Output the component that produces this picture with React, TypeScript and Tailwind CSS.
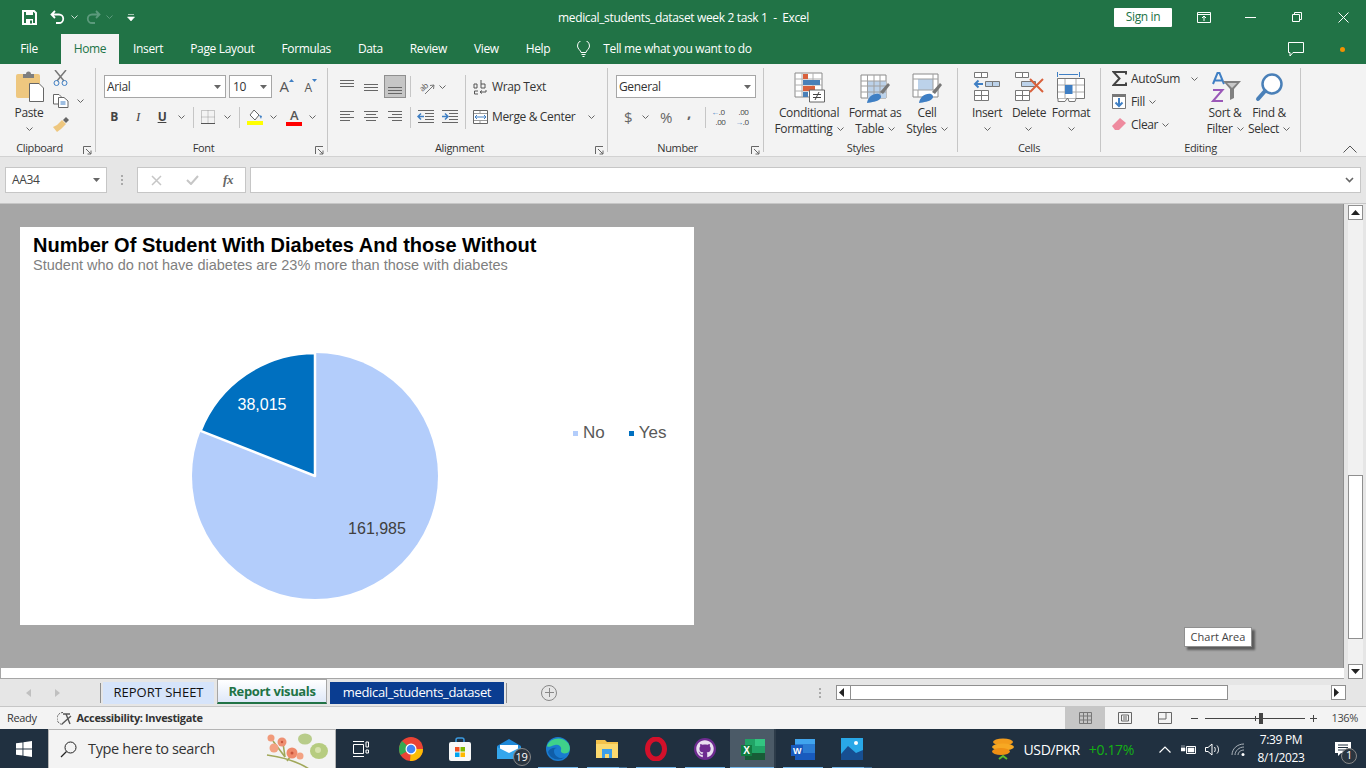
import React from 'react';
import { FaGithub } from 'react-icons/fa';

const ui = { fontFamily: '"Open Sans", "Noto Sans", sans-serif' };

const Chev = ({ color = '#666' }: { color?: string }) => (
  <svg width="7" height="4" viewBox="0 0 7 4" className="shrink-0">
    <path d="M.5.5l3 3 3-3" fill="none" stroke={color} />
  </svg>
);

const Caret = () => (
  <svg width="7" height="4" viewBox="0 0 7 4" className="shrink-0">
    <path d="M0 0h7L3.5 4z" fill="#666" />
  </svg>
);

const Launcher = () => (
  <svg width="9" height="9" viewBox="0 0 9 9" className="absolute right-[3px] bottom-[1px]">
    <path d="M.5 8V.5H8M3 3l5 5M8 4.500V8H4.500" fill="none" stroke="#666" />
  </svg>
);

const Group = ({ w, label, launcher, children }: { w: string; label: string; launcher?: boolean; children: React.ReactNode }) => (
  <div className={`relative flex flex-col shrink-0 ${w}`}>
    <div className="h-[76px] flex">{children}</div>
    <div className={`h-[16px] flex items-center justify-center text-[11px] text-[#333] ${launcher ? 'pr-[16px]' : ''}`}>{label}</div>
    {launcher && <Launcher />}
  </div>
);

const GroupSep = () => <div className="w-px h-[84px] mt-[4px] bg-[#c6c6c6] shrink-0" />;
const RowSep = () => <div className="w-px h-[21px] bg-[#c6c6c6] shrink-0" />;

const BigButton = ({ w, icon, lines, chevInline }: { w: string; icon: React.ReactNode; lines: string[]; chevInline?: boolean }) => (
  <div className={`flex flex-col items-center pt-[7px] shrink-0 ${w}`}>
    <div className="h-[32px] flex items-center justify-center">{icon}</div>
    <div className="mt-[2px] text-[12px] leading-[16px] text-[#333] text-center whitespace-nowrap">
      <div>{lines[0]}</div>
      {chevInline ? (
        <div className="flex items-center justify-center gap-[4px]">
          {lines[1]}
          <Chev />
        </div>
      ) : (
        <div className="h-[16px] flex items-center justify-center">
          <Chev />
        </div>
      )}
    </div>
  </div>
);

const Lines = ({ ys, x1s, x2s }: { ys: number[]; x1s: number[]; x2s: number[] }) => (
  <svg width="16" height="16" viewBox="0 0 16 16">
    {ys.map((y, i) => (
      <path key={i} d={`M${x1s[i]} ${y + 0.5}H${x2s[i]}`} stroke="#666" />
    ))}
  </svg>
);

const Big = {
  Conditional: () => (
    <svg width="31" height="31" viewBox="0 0 31 31">
      <path d="M1 1h27v24H1z" fill="#fff" stroke="#8a8a8a" />
      <path d="M8 1v24M19 1v24M1 7h27M1 13h27M1 19h27" stroke="#b0b0b0" />
      <path d="M9 2h5v5H9zM9 14h12v5H9z" fill="#d9613c" />
      <path d="M9 8h17v5H9zM9 20h5v5H9z" fill="#4a80b8" />
      <path d="M15.500 18h15v12h-15z" fill="#fff" stroke="#666" />
      <path d="M19 22.500h8M19 25.500h8M25 20l-4 8" stroke="#444" fill="none" />
    </svg>
  ),
  Table: () => (
    <svg width="31" height="31" viewBox="0 0 31 31">
      <path d="M1 3h25v23H1z" fill="#fff" stroke="#8a8a8a" />
      <path d="M8 9h18v17H8z" fill="#bcd2ea" />
      <path d="M7.500 3v23M14 3v23M20 3v23M1 9h25M1 14h25M1 20h25" stroke="#a0a0a0" />
      <path d="M20 20l8-9 2 2-7 9z" fill="#777" />
      <path d="M7 31c1-6 6-10 12-9 2 1 3 3 1 5-3 3-8 3-13 4z" fill="#3f7fc4" />
    </svg>
  ),
  Styles: () => (
    <svg width="31" height="31" viewBox="0 0 31 31">
      <path d="M1 2h25v23H1z" fill="#fff" stroke="#8a8a8a" />
      <path d="M6 7h15v11H6z" fill="#bcd2ea" />
      <path d="M1 7h25M1 18h25M6 18v7M21 2v16" stroke="#a0a0a0" fill="none" />
      <path d="M20 20l8-9 2 2-7 9z" fill="#777" />
      <path d="M7 31c1-6 6-10 12-9 2 1 3 3 1 5-3 3-8 3-13 4z" fill="#3f7fc4" />
    </svg>
  ),
  Insert: () => (
    <svg width="28" height="30" viewBox="0 0 28 30">
      <g fill="#fff" stroke="#777">
        <path d="M1.500.500h7v5h-7zM8.500.500h6v5h-6zM1.500 18.500h7v5h-7zM8.500 18.500h7v5h-7zM1.500 23.500h7v5h-7zM8.500 23.500h7v5h-7z" />
      </g>
      <path d="M12.500 9.500h7v5h-7zM19.500 9.500h7v5h-7z" fill="#bcd2ea" stroke="#777" />
      <path d="M10 12H2M5.500 8.500L2 12l3.500 3.500" fill="none" stroke="#3f7fc4" strokeWidth="2" />
    </svg>
  ),
  Delete: () => (
    <svg width="30" height="30" viewBox="0 0 30 30">
      <g fill="#fff" stroke="#777">
        <path d="M1.500.500h7v5h-7zM8.500.500h6v5h-6zM1.500 18.500h7v5h-7zM8.500 18.500h7v5h-7zM1.500 23.500h7v5h-7zM8.500 23.500h7v5h-7z" />
      </g>
      <path d="M7.500 9.500h14v5h-14z" fill="#bcd2ea" stroke="#777" />
      <path d="M16 7l13 13M29 7L16 20" stroke="#d9613c" strokeWidth="2" />
    </svg>
  ),
  Format: () => (
    <svg width="28" height="32" viewBox="0 0 28 32">
      <path d="M.5 1v5M22.500 1v5M2 3.500h19" stroke="#3f7fc4" fill="none" />
      <path d="M.5 7.500h27v20H.5z" fill="#fff" stroke="#777" />
      <path d="M8 8v19M19 8v19M1 14h26M1 21h26" stroke="#aaa" />
      <path d="M8 14h7.500v9H8z" fill="#3f7fc4" />
      <path d="M1 27.500v3h7l2-3M11 27.500l1 3h6l1-3" fill="#fff" stroke="#777" />
    </svg>
  ),
  Sort: () => (
    <svg width="31" height="31" viewBox="0 0 31 31">
      <path d="M3 12L7.500 1h2L14 12M5 8.500h7" fill="none" stroke="#3f7fc4" strokeWidth="2" />
      <path d="M3 18h9.500L3 29h10" fill="none" stroke="#9a58b8" strokeWidth="2" />
      <path d="M13 9h18l-7 8v9l-4 2V17z" fill="#808080" />
      <path d="M17 11h10l-5 5z" fill="#c8c8c8" />
    </svg>
  ),
  Find: () => (
    <svg width="29" height="29" viewBox="0 0 29 29">
      <circle cx="17" cy="11" r="9.500" fill="#fff" stroke="#4a80b8" strokeWidth="2.500" />
      <path d="M10 18l-7 8" stroke="#4a80b8" strokeWidth="4" strokeLinecap="round" />
    </svg>
  ),
};

const Ribbon = () => (
  <div className="h-[93px] bg-[#f3f3f3] border-b border-[#d2d2d2] flex shrink-0">
    <Group w="w-[95px]" label="Clipboard" launcher>
      <div className="flex flex-col items-center w-[46px] ml-[6px] pt-[7px]">
        <svg width="29" height="31" viewBox="0 0 29 31">
          <path d="M1 5a2 2 0 012-2h20a2 2 0 012 2v22H3a2 2 0 01-2-2z" fill="#eec77f" />
          <path d="M8 3h3a2.500 2.500 0 015 0h3v4H8z" fill="#7f7f7f" />
          <path d="M14.500 12.500H24l4.500 4.500v13.500h-14z" fill="#fff" stroke="#666" />
        </svg>
        <div className="mt-[3px] text-[12px] leading-[16px] text-[#333]">Paste</div>
        <div className="h-[16px] flex items-center">
          <Chev />
        </div>
      </div>
      <div className="flex flex-col pt-[2px]">
        <div className="h-[23px] flex items-center pl-[1px]">
          <svg width="15" height="16" viewBox="0 0 15 16">
            <path d="M2 0l9 11M13 0L4 11" stroke="#777" strokeWidth="1.500" />
            <circle cx="3.500" cy="13" r="2.500" fill="none" stroke="#3f7fc4" />
            <circle cx="11.500" cy="13" r="2.500" fill="none" stroke="#3f7fc4" />
          </svg>
        </div>
        <div className="h-[24px] flex items-center gap-[8px] pl-[1px]">
          <svg width="16" height="14" viewBox="0 0 16 14">
            <path d="M.5.500H6L8 2.500V10H.5z" fill="#fff" stroke="#666" />
            <path d="M5.500 3.500H11L15 7v6.500H5.500z" fill="#fff" stroke="#666" />
            <path d="M7.500 8h5M7.500 10h5" stroke="#3f7fc4" />
          </svg>
          <Chev />
        </div>
        <div className="h-[23px] flex items-center pl-[1px]">
          <svg width="16" height="15" viewBox="0 0 16 15">
            <path d="M10 3l3-3 3 3-3 3z" fill="#666" />
            <path d="M9 3l4 4-5 5-4 3-4-5 4-2z" fill="#eec77f" />
          </svg>
        </div>
      </div>
    </Group>
    <GroupSep />
    <Group w="w-[231px]" label="Font" launcher>
      <div className="flex flex-col pl-[8px] pt-[11px]">
        <div className="h-[23px] flex">
          <div className="w-[122px] h-[23px] bg-white border border-[#a6a6a6] flex items-center justify-between pl-[2px] pr-[4px] text-[12px] text-[#333]">
            Arial
            <Caret />
          </div>
          <div className="w-[43px] h-[23px] ml-[3px] bg-white border border-[#a6a6a6] flex items-center justify-between pl-[3px] pr-[4px] text-[12px] text-[#333]">
            10
            <Caret />
          </div>
          <div className="w-[25px] ml-[1px] flex items-center justify-center pl-[2px]">
            <span className="text-[15px] text-[#555]">A</span>
            <svg width="5" height="3" viewBox="0 0 5 3" className="-mt-[12px]">
              <path d="M0 3l2.500-3L5 3z" fill="#3f7fc4" />
            </svg>
          </div>
          <div className="w-[25px] flex items-center justify-center">
            <span className="text-[12px] text-[#555] mt-[2px]">A</span>
            <svg width="5" height="3" viewBox="0 0 5 3" className="-mt-[12px]">
              <path d="M0 0l2.500 3L5 0z" fill="#3f7fc4" />
            </svg>
          </div>
        </div>
        <div className="h-[24px] mt-[7px] -ml-[2px] flex items-center">
          <span className="w-[24px] text-center text-[12px] font-bold text-[#444]">B</span>
          <span className="w-[24px] text-center text-[13px] italic text-[#444]" style={{ fontFamily: '"Liberation Serif", serif' }}>I</span>
          <span className="w-[24px] text-center text-[12px] font-bold underline text-[#444]">U</span>
          <span className="w-[14px] flex justify-center"><Chev /></span>
          <div className="ml-[5px]"><RowSep /></div>
          <span className="w-[22px] ml-[3px] flex justify-center">
            <svg width="14" height="14" viewBox="0 0 14 14">
              <path d="M.5.500h13v13H.5zM7 .5v13M.5 7h13" fill="none" stroke="#999" strokeDasharray="1 1" />
              <path d="M0 13.500h14" stroke="#555" />
            </svg>
          </span>
          <span className="w-[14px] ml-[1px] flex justify-center"><Chev /></span>
          <div className="ml-[5px]"><RowSep /></div>
          <span className="w-[22px] ml-[4px] flex justify-center">
            <svg width="16" height="16" viewBox="0 0 16 16">
              <path d="M7 1l5 5-4 5-5-5z" fill="#fff" stroke="#666" />
              <path d="M12 6l3 1-1 3z" fill="#3f7fc4" />
              <path d="M0 12h16v4H0z" fill="#ffff00" />
            </svg>
          </span>
          <span className="w-[14px] flex justify-center"><Chev /></span>
          <span className="w-[22px] ml-[3px] flex flex-col items-center">
            <span className="text-[13px] leading-[13px] font-semibold text-[#555]">A</span>
            <span className="w-[16px] h-[4px] bg-[#ff0000]" />
          </span>
          <span className="w-[14px] flex justify-center"><Chev /></span>
        </div>
      </div>
    </Group>
    <GroupSep />
    <Group w="w-[279px]" label="Alignment" launcher>
      <div className="flex flex-col pl-[7px] pt-[11px] w-[137px] shrink-0">
        <div className="h-[23px] flex items-center">
          <span className="w-[24px] flex justify-center"><Lines ys={[1, 4, 7]} x1s={[1, 1, 1]} x2s={[15, 15, 15]} /></span>
          <span className="w-[24px] flex justify-center"><Lines ys={[5, 8, 11]} x1s={[1, 1, 1]} x2s={[15, 15, 15]} /></span>
          <span className="w-[22px] h-[23px] ml-[1px] bg-[#c6c6c6] border border-[#8f8f8f] flex items-center justify-center"><Lines ys={[8, 11, 14]} x1s={[1, 1, 1]} x2s={[15, 15, 15]} /></span>
          <div className="ml-[4px]"><RowSep /></div>
          <span className="w-[20px] ml-[6px] flex justify-center">
            <svg width="17" height="16" viewBox="0 0 17 16" className="overflow-visible">
              <text x="1" y="11" fontSize="8" fill="#555" transform="rotate(-40 5 9)" fontFamily="Open Sans">ab</text>
              <path d="M6 15l9-9M15 6l-4 .5M15 6l-.5 4" fill="none" stroke="#777" />
            </svg>
          </span>
          <span className="ml-[2px]"><Chev /></span>
        </div>
        <div className="h-[24px] mt-[7px] flex items-center">
          <span className="w-[24px] flex justify-center"><Lines ys={[2, 5, 8, 11]} x1s={[1, 1, 1, 1]} x2s={[15, 11, 15, 11]} /></span>
          <span className="w-[24px] flex justify-center"><Lines ys={[2, 5, 8, 11]} x1s={[1, 3, 1, 3]} x2s={[15, 13, 15, 13]} /></span>
          <span className="w-[24px] flex justify-center"><Lines ys={[2, 5, 8, 11]} x1s={[1, 5, 1, 5]} x2s={[15, 15, 15, 15]} /></span>
          <div className="ml-[3px]"><RowSep /></div>
          <span className="w-[24px] ml-[2px] flex justify-center">
            <svg width="17" height="14" viewBox="0 0 17 14">
              <path d="M1 .5h16M8 3.500h9M8 6.500h9M8 9.500h9M1 12.500h16" stroke="#666" />
              <path d="M1 6.500h6M4 3.500l-3 3 3 3" stroke="#3f7fc4" strokeWidth="1.500" fill="none" />
            </svg>
          </span>
          <span className="w-[24px] flex justify-center">
            <svg width="17" height="14" viewBox="0 0 17 14">
              <path d="M1 .5h16M8 3.500h9M8 6.500h9M8 9.500h9M1 12.500h16" stroke="#666" />
              <path d="M1 6.500h6M4 3.500l3 3-3 3" stroke="#3f7fc4" strokeWidth="1.500" fill="none" />
            </svg>
          </span>
        </div>
      </div>
      <div className="mt-[11px]"><div className="w-px h-[54px] bg-[#c6c6c6]" /></div>
      <div className="flex flex-col pl-[7px] pt-[11px] text-[12px] text-[#333]">
        <div className="h-[23px] flex items-center">
          <svg width="15" height="16" viewBox="0 0 15 16" className="mr-[4px]">
            <path d="M1 5h3v4H1M1 5v4M8 1v8M8 5h4v4H8M5 15H1.500v-3H5M7 13h6v-2M7 13l2-1.500M7 13l2 1.500" fill="none" stroke="#555" />
          </svg>
          Wrap Text
        </div>
        <div className="h-[24px] mt-[7px] flex items-center">
          <svg width="15" height="14" viewBox="0 0 15 14" className="mr-[4px]">
            <path d="M.5.500h14v13H.5z" fill="#fff" stroke="#666" />
            <path d="M1 3.500h13M1 10.500h13M7 1v2M7 11v2" stroke="#999" />
            <path d="M2.500 7h10M4 5L2 7l2 2M11 5l2 2-2 2" stroke="#3f7fc4" fill="none" />
          </svg>
          Merge &amp; Center
          <span className="ml-[13px]"><Chev /></span>
        </div>
      </div>
    </Group>
    <GroupSep />
    <Group w="w-[155px]" label="Number" launcher>
      <div className="flex flex-col pl-[8px] pt-[11px]">
        <div className="w-[140px] h-[23px] bg-white border border-[#a6a6a6] flex items-center justify-between pl-[2px] pr-[4px] text-[12px] text-[#333]">
          General
          <Caret />
        </div>
        <div className="h-[24px] mt-[7px] flex items-center text-[#666]">
          <span className="w-[24px] text-center text-[15px]">$</span>
          <span className="w-[10px] flex justify-center"><Chev /></span>
          <span className="w-[24px] ml-[4px] text-center text-[15px]">%</span>
          <span className="w-[22px] text-center text-[15px] font-bold leading-[10px] -mt-[10px]">,</span>
          <div className="ml-[5px]"><RowSep /></div>
          <span className="w-[24px] flex flex-col items-center text-[8px] leading-[10px] text-[#444] whitespace-nowrap">
            <span><span className="text-[#3f7fc4]">←</span>.0</span>
            <span className="ml-[5px]">.00</span>
          </span>
          <span className="w-[24px] flex flex-col items-center text-[8px] leading-[10px] text-[#444] whitespace-nowrap">
            <span className="ml-[3px]">.00</span>
            <span><span className="text-[#3f7fc4]">→</span>.0</span>
          </span>
        </div>
      </div>
    </Group>
    <GroupSep />
    <Group w="w-[193px]" label="Styles">
      <div className="flex pl-[5px]">
        <BigButton w="w-[80px]" icon={<Big.Conditional />} lines={['Conditional', 'Formatting']} chevInline />
        <BigButton w="w-[52px]" icon={<Big.Table />} lines={['Format as', 'Table']} chevInline />
        <BigButton w="w-[52px]" icon={<Big.Styles />} lines={['Cell', 'Styles']} chevInline />
      </div>
    </Group>
    <GroupSep />
    <Group w="w-[142px]" label="Cells">
      <div className="flex pl-[8px]">
        <BigButton w="w-[42px]" icon={<Big.Insert />} lines={['Insert']} />
        <BigButton w="w-[42px]" icon={<Big.Delete />} lines={['Delete']} />
        <BigButton w="w-[42px]" icon={<Big.Format />} lines={['Format']} />
      </div>
    </Group>
    <GroupSep />
    <Group w="w-[199px]" label="Editing">
      <div className="flex flex-col w-[102px] pl-[11px] pt-[3px] text-[12px] text-[#333] shrink-0">
        <div className="h-[23px] flex items-center">
          <svg width="15" height="15" viewBox="0 0 15 15">
            <path d="M14 3.500V1H1.500l6 6.500-6 6.500H14v-2.500" fill="none" stroke="#444" strokeWidth="2" />
          </svg>
          <span className="ml-[4px]">AutoSum</span>
          <span className="ml-[11px]"><Chev /></span>
        </div>
        <div className="h-[23px] flex items-center">
          <svg width="14" height="15" viewBox="0 0 14 15">
            <path d="M.5.500h13v14H.5z" fill="#fff" stroke="#777" />
            <path d="M0 0h14v3H0z" fill="#777" />
            <path d="M7 4v8M3.500 8.500L7 12l3.500-3.500" fill="none" stroke="#3f7fc4" strokeWidth="2" />
          </svg>
          <span className="ml-[5px]">Fill</span>
          <span className="ml-[4px]"><Chev /></span>
        </div>
        <div className="h-[23px] flex items-center">
          <svg width="14" height="13" viewBox="0 0 14 13">
            <path d="M0 8l8-8 6 5-7 7H3z" fill="#ee8a9e" />
          </svg>
          <span className="ml-[5px]">Clear</span>
          <span className="ml-[4px]"><Chev /></span>
        </div>
      </div>
      <BigButton w="w-[44px]" icon={<Big.Sort />} lines={['Sort &', 'Filter']} chevInline />
      <BigButton w="w-[44px]" icon={<Big.Find />} lines={['Find &', 'Select']} chevInline />
    </Group>
    <GroupSep />
    <div className="flex-1 flex justify-end items-end pb-[3px] pr-[9px]">
      <svg width="14" height="8" viewBox="0 0 14 8">
        <path d="M.5 7.500L7 1l6.500 6.500" fill="none" stroke="#555" />
      </svg>
    </div>
  </div>
);

const TitleBar = () => (
  <div className="h-[34px] flex items-center relative shrink-0 text-white">
    <div className="w-[58px] flex justify-end pr-[21px] pl-[21px] shrink-0">
      <svg width="15" height="15" viewBox="0 0 15 15">
        <path d="M1 1h11l2 2v11H1z" fill="none" stroke="#fff" strokeWidth="2" />
        <path d="M4 1h7v4H4zM4 9h7v5H4z" fill="#fff" />
        <path d="M8 10.500h2v3H8z" fill="#217346" />
      </svg>
    </div>
    <svg width="16" height="14" viewBox="0 0 16 14" className="-ml-[8px]">
      <path d="M5 1L1.500 4.500 5 8M2 4.500h7a4.200 4.200 0 010 8.500H6" fill="none" stroke="#fff" strokeWidth="1.800" />
    </svg>
    <span className="ml-[5px]"><Chev color="#cfe0d6" /></span>
    <svg width="16" height="14" viewBox="0 0 16 14" className="ml-[7px]">
      <path d="M11 1l3.500 3.500L11 8M14 4.500H7a4.200 4.200 0 000 8.500h3" fill="none" stroke="#5c9a7c" strokeWidth="1.800" />
    </svg>
    <span className="ml-[5px]"><Chev color="#5c9a7c" /></span>
    <svg width="8" height="7" viewBox="0 0 8 7" className="ml-[14px]">
      <path d="M1 .5h6M.5 3h7L4 7z" fill="#fff" stroke="#fff" strokeWidth=".6" />
    </svg>
    <div className="absolute left-[558px] top-0 pt-[1px] h-[34px] flex items-center text-[12px] whitespace-pre">medical_students_dataset week 2 task 1  -  Excel</div>
    <div className="ml-auto flex items-center">
      <div className="w-[58px] h-[19px] bg-white rounded-[1px] text-[#217346] text-[12px] flex items-center justify-center">Sign in</div>
      <div className="w-[46px] ml-[9px] flex justify-center">
        <svg width="14" height="11" viewBox="0 0 14 11">
          <path d="M.5.500h13v10H.5zM1 2.500h12M7 9V4M5 6l2-2 2 2" fill="none" stroke="#fff" />
        </svg>
      </div>
      <div className="w-[47px] flex justify-center">
        <svg width="11" height="1" viewBox="0 0 11 1"><path d="M0 .5h11" stroke="#fff" /></svg>
      </div>
      <div className="w-[46px] flex justify-center">
        <svg width="10" height="10" viewBox="0 0 10 10">
          <path d="M.5 2.500h7v7h-7zM2.500 2V.5h7v7H8" fill="none" stroke="#fff" />
        </svg>
      </div>
      <div className="w-[46px] flex justify-center">
        <svg width="11" height="11" viewBox="0 0 11 11"><path d="M.5.500l10 10M10.500.500l-10 10" stroke="#fff" /></svg>
      </div>
    </div>
  </div>
);

const TabBar = () => (
  <div className="h-[30px] flex items-stretch text-white text-[12px] shrink-0 relative">
    <div className="w-[61px] flex items-center justify-center pr-[3px]">File</div>
    <div className="w-[58px] bg-[#f3f3f3] text-[#217346] flex items-center justify-center">Home</div>
    <div className="flex items-center gap-[27px] ml-[14px] whitespace-nowrap">
      <span>Insert</span>
      <span>Page Layout</span>
      <span>Formulas</span>
      <span>Data</span>
      <span>Review</span>
      <span>View</span>
      <span>Help</span>
      <span className="flex items-center gap-[13px]">
        <svg width="13" height="16" viewBox="0 0 13 16">
          <path d="M4 11.500c0-2-3.500-3.500-3.500-6.500a6 6 0 0112 0c0 3-3.500 4.500-3.500 6.500zM4.500 13.500h4M5.500 15.500h2" fill="none" stroke="#fff" />
        </svg>
        Tell me what you want to do
      </span>
    </div>
    <div className="ml-auto flex items-center">
      <svg width="16" height="15" viewBox="0 0 16 15">
        <path d="M.5.500h15v10H5l-3 3.500v-3.500H.5z" fill="none" stroke="#fff" />
      </svg>
      <span className="w-[5px] h-[5px] rounded-full bg-[#f29100] ml-[36px] mr-[21px]" />
    </div>
  </div>
);

const FormulaBar = () => (
  <div className="h-[47px] bg-[#e6e6e6] flex items-center pl-[5px] pr-[5px] shrink-0 border-b border-[#c6c6c6]">
    <div className="w-[102px] h-[26px] bg-white border border-[#c6c6c6] flex items-center justify-between pl-[6px] pr-[6px] text-[12px] text-[#444]">
      AA34
      <Caret />
    </div>
    <div className="w-[30px] flex flex-col items-center gap-[2px]">
      <span className="w-[2px] h-[2px] bg-[#aaa]" />
      <span className="w-[2px] h-[2px] bg-[#aaa]" />
      <span className="w-[2px] h-[2px] bg-[#aaa]" />
    </div>
    <div className="w-[109px] h-[26px] bg-white border border-[#c6c6c6] flex items-center">
      <span className="w-[36px] ml-[1px] flex justify-center">
        <svg width="11" height="11" viewBox="0 0 11 11"><path d="M1 1l9 9M10 1l-9 9" stroke="#c6c6c6" strokeWidth="1.500" /></svg>
      </span>
      <span className="w-[37px] flex justify-center">
        <svg width="13" height="10" viewBox="0 0 13 10"><path d="M1 5l4 4 7-8" fill="none" stroke="#c6c6c6" strokeWidth="2" /></svg>
      </span>
      <span className="w-[34px] text-center text-[13px] italic font-bold text-[#666]" style={{ fontFamily: '"Liberation Serif", serif' }}>fx</span>
    </div>
    <div className="flex-1 h-[26px] ml-[4px] bg-white border border-[#c6c6c6] flex items-center justify-end pr-[6px]">
      <svg width="9" height="6" viewBox="0 0 9 6"><path d="M1 1l3.500 3.500L8 1" fill="none" stroke="#666" strokeWidth="1.600" /></svg>
    </div>
  </div>
);

const Chart = () => (
  <div className="w-[674px] h-[398px] bg-white ml-[19px] mt-[23px] pl-[13px] pt-[6px] tracking-normal" style={{ fontFamily: '"Liberation Sans", Arial, sans-serif' }}>
    <div className="text-[20px] leading-[24px] font-bold text-black whitespace-nowrap">Number Of Student With Diabetes And those Without</div>
    <div className="text-[14.500px] leading-[16px] text-[#7f7f7f] whitespace-nowrap">Student who do not have diabetes are 23% more than those with diabetes</div>
    <div className="flex items-start mt-[80px]">
      <svg width="248" height="248" viewBox="0 0 248 248" className="ml-[158px] shrink-0 -mt-[1px]">
        <circle cx="124" cy="124" r="123" fill="#b3cdfb" />
        <path d="M124 124V1A123 123 0 0 0 9.600 78.800z" fill="#0070c0" stroke="#fff" strokeWidth="2.500" strokeLinejoin="round" />
        <text x="71" y="58" textAnchor="middle" fontSize="16" fill="#fff">38,015</text>
        <text x="186" y="182" textAnchor="middle" fontSize="16" fill="#404040">161,985</text>
      </svg>
      <div className="ml-[134px] mt-[70px] flex items-center text-[17px] leading-[20px] text-[#595959]">
        <span className="w-[5px] h-[5px] bg-[#b3cdfb]" />
        <span className="ml-[5px]">No</span>
        <span className="w-[5px] h-[5px] bg-[#0070c0] ml-[24px]" />
        <span className="ml-[5px]">Yes</span>
      </div>
    </div>
  </div>
);

const ScrollBtn = ({ dir }: { dir: 'up' | 'down' | 'left' | 'right' }) => {
  const d = { up: 'M0 5L4.500 0 9 5z', down: 'M0 0l4.500 5L9 0z', left: 'M5 0L0 4.500 5 9z', right: 'M0 0l5 4.500L0 9z' }[dir];
  return (
    <div className="w-[15px] h-[15px] bg-white border border-[#8f8f8f] flex items-center justify-center shrink-0">
      <svg width="9" height="9" viewBox="0 0 9 9" className={dir === 'left' || dir === 'right' ? '' : 'mt-[3px]'}>
        <path d={d} fill="#222" />
      </svg>
    </div>
  );
};

const SheetArea = () => (
  <div className="h-[475px] flex shrink-0 relative">
    <div className="w-[1344px] shrink-0 flex flex-col bg-white border-l border-b border-[#a6a6a6]">
      <div className="h-[464px] bg-[#a6a6a6] flex items-start border-r border-[#8f8f8f]">
        <Chart />
      </div>
    </div>
    <div className="flex-1 bg-[#e6e6e6] pl-[4px] pr-[3px] flex">
      <div className="w-[15px] bg-[#f1f1f1] flex flex-col">
        <div className="h-[1px]" />
        <ScrollBtn dir="up" />
        <div className="h-[255px]" />
        <div className="h-[164px] bg-white border border-[#8f8f8f]" />
        <div className="flex-1" />
        <ScrollBtn dir="down" />
      </div>
    </div>
    <div className="absolute left-[1184px] top-[423px] w-[68px] h-[20px] bg-white border border-[#8f8f8f] shadow-[3px_3px_2px_rgba(0,0,0,0.45)] flex items-center justify-center text-[11px] tracking-normal text-[#444] whitespace-nowrap">Chart Area</div>
  </div>
);

const SheetTabs = () => (
  <div className="h-[28px] bg-[#e6e6e6] border-b border-[#c6c6c6] flex items-center text-[13px] shrink-0">
    <div className="w-[100px] flex pl-[26px] gap-[24px] shrink-0">
      <svg width="5" height="8" viewBox="0 0 5 8"><path d="M5 0L0 4l5 4z" fill="#c0c0c0" /></svg>
      <svg width="5" height="8" viewBox="0 0 5 8"><path d="M0 0l5 4-5 4z" fill="#c0c0c0" /></svg>
    </div>
    <div className="w-px h-[20px] bg-[#8f8f8f] shrink-0" />
    <div className="w-[111px] h-[22px] ml-[2px] bg-[#d6e4fa] text-[#111] tracking-normal flex items-center justify-center">REPORT SHEET</div>
    <div className="w-[110px] h-[25px] ml-[3px] -mt-[3px] pt-[2px] border-x border-t border-[#a6a6a6] border-b-2 border-b-[#217346] bg-gradient-to-b from-white to-[#dfe8f8] text-[#217346] font-bold flex items-center justify-center">Report visuals</div>
    <div className="w-[174px] h-[22px] ml-[3px] bg-[#0a3d91] text-white flex items-center justify-center">medical_students_dataset</div>
    <div className="w-px h-[20px] ml-[2px] bg-[#8f8f8f] shrink-0" />
    <div className="ml-[34px] w-[16px] h-[16px] rounded-full border border-[#888] flex items-center justify-center">
      <svg width="9" height="9" viewBox="0 0 9 9"><path d="M4.500 0v9M0 4.500h9" stroke="#888" /></svg>
    </div>
    <div className="ml-[262px] flex flex-col gap-[2px]">
      <span className="w-[2px] h-[2px] bg-[#aaa]" />
      <span className="w-[2px] h-[2px] bg-[#aaa]" />
      <span className="w-[2px] h-[2px] bg-[#aaa]" />
    </div>
    <div className="ml-[15px] flex items-center">
      <ScrollBtn dir="left" />
      <div className="w-[377px] h-[15px] bg-white border border-[#8f8f8f] border-l-0" />
      <div className="w-[103px] h-[15px] bg-[#efefef]" />
      <ScrollBtn dir="right" />
    </div>
  </div>
);

const StatusBar = () => (
  <div className="h-[22px] bg-[#f3f3f3] flex items-center text-[11px] text-[#333] shrink-0">
    <span className="ml-[7px]">Ready</span>
    <svg width="17" height="15" viewBox="0 0 17 15" className="ml-[20px]">
      <path d="M6 1.500a6 6 0 100 12" fill="none" stroke="#555" strokeDasharray="2 1" />
      <path d="M6 3h7M9 3l4 10M14 5l-9 8" stroke="#555" strokeWidth="1.400" fill="none" />
    </svg>
    <span className="ml-[3px] font-bold text-[#333]">Accessibility: Investigate</span>
    <div className="ml-auto h-[22px] flex items-center">
      <div className="w-[40px] h-[22px] bg-[#c6c6c6] flex items-center justify-center">
        <svg width="13" height="12" viewBox="0 0 13 12"><path d="M.5.500h12v11H.5zM4.500 1v10M8.500 1v10M1 4h11M1 8h11" fill="none" stroke="#777" /></svg>
      </div>
      <div className="w-[40px] flex justify-center">
        <svg width="14" height="12" viewBox="0 0 14 12"><path d="M.5.500h13v11H.5zM3.500 3h7v6h-7zM5 5h4M5 7h4" fill="none" stroke="#666" /></svg>
      </div>
      <div className="w-[40px] flex justify-center">
        <svg width="14" height="12" viewBox="0 0 14 12"><path d="M.5.500h13v11H.5zM.5 7H8V.5" fill="none" stroke="#666" /></svg>
      </div>
      <svg width="7" height="1" viewBox="0 0 7 1" className="ml-[6px]"><path d="M0 .5h7" stroke="#444" /></svg>
      <div className="w-[100px] h-[1px] ml-[7px] bg-[#444] relative">
        <span className="absolute left-[50px] -top-[2px] w-px h-[5px] bg-[#444]" />
        <span className="absolute left-[54px] -top-[5px] w-[4px] h-[11px] bg-[#444]" />
      </div>
      <svg width="9" height="9" viewBox="0 0 9 9" className="ml-[4px]"><path d="M4.500 1v7M1 4.500h7" stroke="#444" /></svg>
      <span className="ml-[13px] mr-[8px] text-[#444]">136%</span>
    </div>
  </div>
);

const TaskItem = ({ w = 'w-[49px]', bar, active, stack, children }: { w?: string; bar?: boolean; active?: boolean; stack?: boolean; children: React.ReactNode }) => (
  <div className={`relative h-[40px] flex items-center justify-center shrink-0 ${w} ${active ? 'bg-[#4b5a67]' : ''}`}>
    {children}
    {bar && <span className={`absolute bottom-0 h-[2px] bg-[#76b9ed] ${active ? 'left-0 right-0' : 'left-[5px] right-[4px]'}`} />}
    {stack && <span className="absolute bottom-0 right-[4px] w-[8px] h-[2px] bg-[#44739c]" />}
  </div>
);

const Flowers = () => (
  <svg width="66" height="40" viewBox="0 0 66 40" className="mr-[6px]">
    <path d="M4 26c14 2 30 6 42 14M10 12l12 16M20 14l2 14M30 24l-6 8" stroke="#a1a85a" strokeWidth="1.600" fill="none" />
    <circle cx="8" cy="9" r="3.500" fill="#f19a7a" />
    <circle cx="11" cy="19" r="4.500" fill="#f3a283" />
    <circle cx="19" cy="13" r="4.500" fill="#ee9073" />
    <circle cx="29" cy="24" r="5.500" fill="#ef8a6b" />
    <circle cx="37" cy="27" r="3.500" fill="#f3a283" />
    <circle cx="29" cy="24" r="1.500" fill="#c9553c" />
    <circle cx="19" cy="13" r="1.200" fill="#c9553c" />
    <ellipse cx="42" cy="10" rx="7" ry="5.500" fill="#b8cc8a" />
    <ellipse cx="56" cy="22" rx="9" ry="8" fill="#b6cc80" />
    <circle cx="55" cy="21" r="3" fill="#d6e2ac" />
  </svg>
);

const Taskbar = () => (
  <div className="h-[40px] bg-[#203040] flex items-center text-white shrink-0 relative">
    <div className="w-[48px] flex justify-center shrink-0">
      <svg width="16" height="16" viewBox="0 0 16 16">
        <path d="M0 2.300L6.500 1.400v6.200H0zM7.400 1.300L16 0v7.600H7.400zM0 8.400h6.500v6.200L0 13.700zM7.400 8.400H16V16l-8.600-1.300z" fill="#fff" />
      </svg>
    </div>
    <div className="w-[288px] h-[40px] bg-[#f3f3f3] border border-[#b4b4b4] flex items-center overflow-hidden shrink-0">
      <svg width="17" height="17" viewBox="0 0 17 17" className="ml-[11px]">
        <circle cx="10.500" cy="6.500" r="5.500" fill="none" stroke="#222" />
        <path d="M6.500 10.500L1 16" stroke="#222" strokeWidth="1.300" />
      </svg>
      <span className="ml-[11px] text-[14.500px] text-[#333] whitespace-nowrap">Type here to search</span>
      <span className="ml-auto"><Flowers /></span>
    </div>
    <TaskItem>
      <svg width="16" height="16" viewBox="0 0 16 16">
        <path d="M.5 3.500h10v9H.5zM0 .5h11M0 15.500h11M13 1h2.500v5H13zM13 9h2.500v3H13z" fill="none" stroke="#fff" />
      </svg>
    </TaskItem>
    <div className="w-px shrink-0" />
    <TaskItem>
      <svg width="24" height="24" viewBox="0 0 24 24">
        <circle cx="12" cy="12" r="12" fill="#ea4335" />
        <path d="M12 12L1.600 18A12 12 0 0 1 3 4z" fill="#34a853" />
        <path d="M12 12H24a12 12 0 0 1-13 12z" fill="#fbbc05" />
        <circle cx="12" cy="12" r="5.500" fill="#fff" />
        <circle cx="12" cy="12" r="4.300" fill="#4285f4" />
      </svg>
    </TaskItem>
    <TaskItem>
      <svg width="22" height="24" viewBox="0 0 22 24">
        <path d="M7 5V3a2 2 0 012-2h4a2 2 0 012 2v2" fill="none" stroke="#3b9ae1" strokeWidth="1.500" />
        <rect x="0" y="5" width="22" height="19" rx="2" fill="#f8f8f8" />
        <path d="M6 10h4.500v4.500H6z" fill="#f25022" />
        <path d="M11.500 10H16v4.500h-4.500z" fill="#7fba00" />
        <path d="M6 15.500h4.500V20H6z" fill="#00a4ef" />
        <path d="M11.500 15.500H16V20h-4.500z" fill="#ffb900" />
      </svg>
    </TaskItem>
    <TaskItem>
      <div className="relative">
        <svg width="24" height="20" viewBox="0 0 24 20">
          <path d="M0 7L12 0l12 7v13H0z" fill="#1e88d8" />
          <path d="M3 6h18v7l-9 4-9-4z" fill="#fff" />
          <path d="M0 8l12 6 12-6v12H0z" fill="#34a6ec" />
        </svg>
        <span className="absolute -right-[10px] -bottom-[7px] w-[18px] h-[18px] rounded-full bg-[#2a3540] border border-[#888] text-[11px] flex items-center justify-center">19</span>
      </div>
    </TaskItem>
    <TaskItem bar>
      <svg width="24" height="24" viewBox="0 0 24 24">
        <circle cx="12" cy="12" r="12" fill="#1a7bd0" />
        <path d="M1 9C3 2 15-2 22 6c3 4 2 9-1 10-3 1-7 0-6-3 1-3-2-6-6-5-4 1-7 3-8 1z" fill="#3fd18a" />
        <path d="M8 14c0 5 6 9 11 6-6 5-15 2-17-5 1-3 5-5 9-4-2 0-3 1-3 3z" fill="#0f5da8" />
      </svg>
    </TaskItem>
    <TaskItem bar stack>
      <svg width="22" height="18" viewBox="0 0 22 18">
        <path d="M0 0h9l2 2h11v16H0z" fill="#f3c14a" />
        <path d="M0 4h22v14H0z" fill="#fbd96f" />
        <path d="M6 9h10v9h-3v-4H9v4H6z" fill="#3c9ee8" />
      </svg>
    </TaskItem>
    <TaskItem bar>
      <svg width="22" height="24" viewBox="0 0 22 24">
        <ellipse cx="11" cy="12" rx="8.500" ry="10" fill="none" stroke="#d3102a" strokeWidth="5" />
      </svg>
    </TaskItem>
    <TaskItem bar>
      <span className="w-[22px] h-[22px] rounded-full bg-[#6e2b90] flex items-center justify-center">
        <FaGithub size={18} color="#e9dff0" />
      </span>
    </TaskItem>
    <div className="w-px shrink-0" />
    <TaskItem w="w-[44px]" bar active>
      <svg width="24" height="21" viewBox="0 0 24 21" className="ml-[2px]">
        <path d="M4 0h20v21H4z" fill="#21a366" />
        <path d="M14 0h10v7H14z" fill="#33c481" />
        <path d="M4 14h20v7H4z" fill="#185c37" />
        <path d="M0 6h11v11H0z" fill="#107c41" />
        <text x="5.500" y="15" textAnchor="middle" fontSize="10" fontWeight="bold" fill="#fff" fontFamily="Liberation Sans">X</text>
      </svg>
    </TaskItem>
    <div className="w-[2px] h-[40px] bg-[#2d3c4a] shrink-0" />
    <div className="w-[2px] shrink-0" />
    <TaskItem bar>
      <svg width="24" height="21" viewBox="0 0 24 21">
        <path d="M4 0h20v21H4z" fill="#2b7cd3" />
        <path d="M4 0h20v5H4z" fill="#41a5ee" />
        <path d="M4 14h20v7H4z" fill="#185abd" />
        <path d="M0 6h12v11H0z" fill="#185abd" />
        <text x="6" y="15" textAnchor="middle" fontSize="9" fontWeight="bold" fill="#fff" fontFamily="Liberation Sans">W</text>
      </svg>
    </TaskItem>
    <TaskItem bar stack>
      <svg width="22" height="22" viewBox="0 0 22 22">
        <path d="M0 0h22v22H0z" fill="#29a8e8" />
        <circle cx="15" cy="5" r="2" fill="#fff" />
        <path d="M0 16l7-8 8 7 7-3v10H0z" fill="#174f92" />
      </svg>
    </TaskItem>
    <div className="ml-auto flex items-center">
      <svg width="24" height="22" viewBox="0 0 24 22">
        <ellipse cx="12" cy="4" rx="10" ry="3.500" fill="#f39c1c" />
        <ellipse cx="12" cy="9" rx="11" ry="3.500" fill="#f7a823" />
        <ellipse cx="10" cy="13.500" rx="9" ry="3.500" fill="#ee8f14" />
        <path d="M8 21l4-3 4 3" fill="none" stroke="#5dbb2c" strokeWidth="2" />
      </svg>
      <span className="ml-[8px] text-[14px]">USD/PKR</span>
      <span className="ml-[9px] text-[14px] text-[#14b014]">+0.17%</span>
      <svg width="12" height="7" viewBox="0 0 12 7" className="ml-[25px]"><path d="M.5 6.500L6 1l5.500 5.500" fill="none" stroke="#fff" strokeWidth="1.200" /></svg>
      <svg width="16" height="11" viewBox="0 0 16 11" className="ml-[10px]">
        <path d="M5.500 2.500h9v7h-9z" fill="none" stroke="#fff" />
        <path d="M7 4h6v4H7zM0 4h4v3H0zM1 1v3M3 1v3" fill="#fff" stroke="#fff" strokeWidth=".5" />
      </svg>
      <svg width="16" height="13" viewBox="0 0 16 13" className="ml-[8px]">
        <path d="M.5 4.500H3L7 1v11L3 8.500H.5zM9.500 4c1 1.500 1 3.500 0 5M12 2.500c2 2.500 2 6 0 8" fill="none" stroke="#fff" />
      </svg>
      <svg width="14" height="13" viewBox="0 0 14 13" className="ml-[10px]">
        <path d="M1 12C1 6 6 1 13 1M4 12c0-4 4-8 9-8M7 12c0-3 3-5 6-5" fill="none" stroke="#aab2b9" />
        <circle cx="12" cy="11.500" r="1.500" fill="#fff" />
      </svg>
      <div className="w-[68px] ml-[2px] text-center text-[12px] leading-[18px]">
        <div>7:39 PM</div>
        <div>8/1/2023</div>
      </div>
      <div className="w-[46px] flex justify-center ml-[5px] relative">
        <svg width="16" height="15" viewBox="0 0 16 15">
          <path d="M0 0h16v11H6l-3 3v-3H0z" fill="#fff" />
          <path d="M3 3h10M3 5.500h10M3 8h7" stroke="#203040" />
        </svg>
        <span className="absolute left-[21px] top-[6px] w-[16px] h-[16px] rounded-full bg-[#2a3540] border border-[#888] text-[11px] flex items-center justify-center">1</span>
      </div>
    </div>
  </div>
);

export default function App() {
  return (
    <div className="w-[1366px] h-[768px] overflow-hidden flex flex-col bg-[#217346] tracking-[-0.35px]" style={ui}>
      <TitleBar />
      <TabBar />
      <Ribbon />
      <FormulaBar />
      <SheetArea />
      <SheetTabs />
      <StatusBar />
      <Taskbar />
    </div>
  );
}
